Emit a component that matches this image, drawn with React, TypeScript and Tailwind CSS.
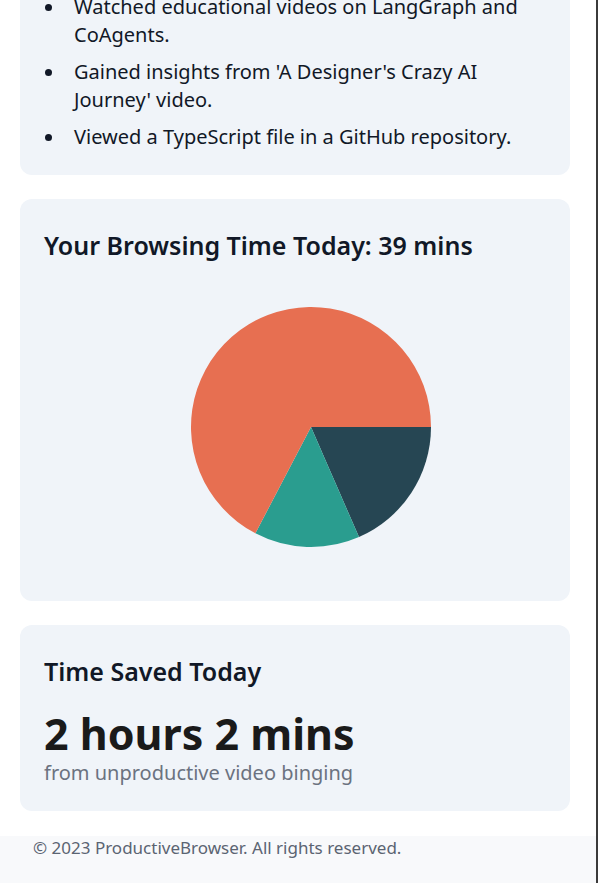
const font = { fontFamily: '"Noto Sans", "Open Sans", sans-serif' };

const highlights = [
  "Watched educational videos on LangGraph and CoAgents.",
  "Gained insights from 'A Designer's Crazy AI Journey' video.",
  "Viewed a TypeScript file in a GitHub repository.",
];

function PieChart() {
  // center at (267,150), radius 120
  return (
    <svg width="502" height="300" viewBox="0 0 502 300" className="block">
      <path d="M267 150 L387 150 A120 120 0 0 1 315 260 Z" fill="#264653" />
      <path d="M267 150 L315 260 A120 120 0 0 1 211.4 256.3 Z" fill="#2a9d8f" />
      <path d="M267 150 L211.4 256.3 A120 120 0 1 1 387 150 Z" fill="#e76f51" />
    </svg>
  );
}

export default function App() {
  return (
    <div className="flex min-h-[883px] bg-white" style={font}>
      <div className="flex-1 flex flex-col overflow-hidden">
        <main className="pl-5 pr-[26px] flex flex-col gap-6">
          {/* Highlights card (scrolled partly out of view) */}
          <section className="bg-[#f0f4f9] rounded-b-xl px-6 pb-6">
            <ul className="-mt-[7px] space-y-[9px] text-[20px] leading-7 text-[#111827]">
              {highlights.map((h) => (
                <li key={h} className="relative pl-[30px]">
                  <span className="absolute left-[1px] top-[11px] w-[7px] h-[7px] rounded-full bg-[#111827]" />
                  {h}
                </li>
              ))}
            </ul>
          </section>

          {/* Browsing time */}
          <section className="bg-[#f0f4f9] rounded-xl px-6 pt-[30px] pb-6">
            <h2 className="text-[25px] leading-8 font-semibold text-[#111827] mb-4">
              Your Browsing Time Today: 39 mins
            </h2>
            <PieChart />
          </section>

          {/* Time saved */}
          <section className="bg-[#f0f4f9] rounded-xl px-6 pt-[30px] pb-6">
            <h2 className="text-[25px] leading-8 font-semibold text-[#111827]">
              Time Saved Today
            </h2>
            <p className="mt-[23px] text-[43px] leading-[47px] font-bold text-[#1a1a1a]">
              2 hours 2 mins
            </p>
            <p className="mt-[2px] text-[20px] leading-7 text-[#6b7280]">
              from unproductive video binging
            </p>
          </section>
        </main>

        <footer className="mt-[25px] bg-[#f8f9fb] px-[33px] pb-10 flex-1">
          <p className="text-[17px] leading-6 text-[#5b6472]">
            © 2023 ProductiveBrowser. All rights reserved.
          </p>
        </footer>
      </div>
      <div className="w-[2px] bg-[#3b3b3b]" />
    </div>
  );
}
